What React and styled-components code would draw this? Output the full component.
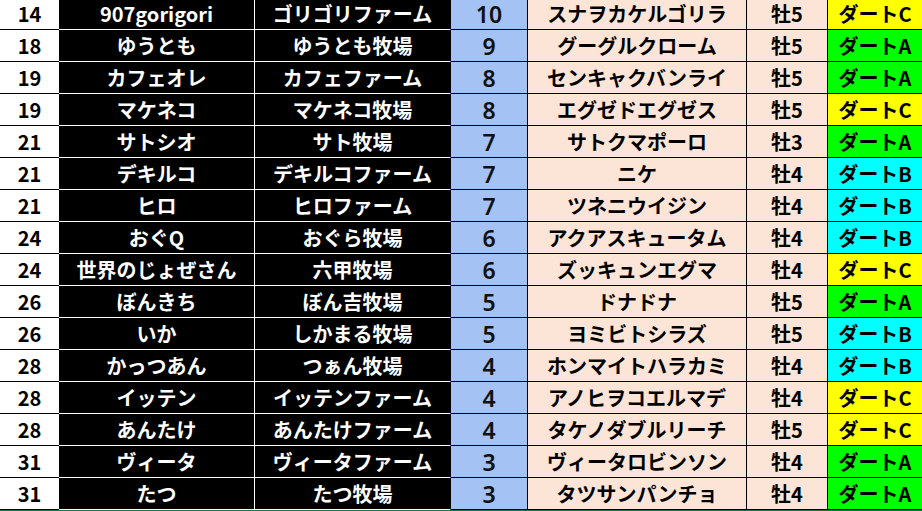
import React from 'react';
import styled, { createGlobalStyle } from 'styled-components';

const GlobalStyle = createGlobalStyle`
  html, body {
    margin: 0;
    padding: 0;
    background: #ffffff;
    overflow: hidden;
  }
  body {
    font-family: "Noto Sans CJK JP", "Noto Sans", sans-serif;
  }
`;

const dartColors = {
  A: '#00ff00',
  B: '#00ffff',
  C: '#ffff00',
};

const rows = [
  ['14', '907gorigori', 'ゴリゴリファーム', '10', 'スナヲカケルゴリラ', '牡5', 'C'],
  ['18', 'ゆうとも', 'ゆうとも牧場', '9', 'グーグルクローム', '牡5', 'A'],
  ['19', 'カフェオレ', 'カフェファーム', '8', 'センキャクバンライ', '牡5', 'A'],
  ['19', 'マケネコ', 'マケネコ牧場', '8', 'エグゼドエグゼス', '牡5', 'C'],
  ['21', 'サトシオ', 'サト牧場', '7', 'サトクマポーロ', '牡3', 'A'],
  ['21', 'デキルコ', 'デキルコファーム', '7', 'ニケ', '牡4', 'B'],
  ['21', 'ヒロ', 'ヒロファーム', '7', 'ツネニウイジン', '牡4', 'B'],
  ['24', 'おぐQ', 'おぐら牧場', '6', 'アクアスキュータム', '牡4', 'B'],
  ['24', '世界のじょぜさん', '六甲牧場', '6', 'ズッキュンエグマ', '牡4', 'C'],
  ['26', 'ぼんきち', 'ぼん吉牧場', '5', 'ドナドナ', '牡5', 'A'],
  ['26', 'いか', 'しかまる牧場', '5', 'ヨミビトシラズ', '牡5', 'B'],
  ['28', 'かっつあん', 'つぁん牧場', '4', 'ホンマイトハラカミ', '牡4', 'B'],
  ['28', 'イッテン', 'イッテンファーム', '4', 'アノヒヲコエルマデ', '牡4', 'C'],
  ['28', 'あんたけ', 'あんたけファーム', '4', 'タケノダブルリーチ', '牡5', 'C'],
  ['31', 'ヴィータ', 'ヴィータファーム', '3', 'ヴィータロビンソン', '牡4', 'A'],
  ['31', 'たつ', 'たつ牧場', '3', 'タツサンパンチョ', '牡4', 'A'],
];

const Sheet = styled.div`
  width: 922px;
  margin-top: -2px;
  display: grid;
  grid-template-columns: 59px 196px 196px 77px 219px 81px 94px;
  grid-auto-rows: 32px;
  border-bottom: 2px solid #217346;
`;

const Cell = styled.div`
  box-sizing: border-box;
  display: flex;
  align-items: center;
  justify-content: center;
  white-space: nowrap;
  font-weight: 700;
  font-size: 20px;
  line-height: 1.2;
  color: #000000;
  border-bottom: 1px solid #000000;
  border-right: 1px solid #000000;
`;

const RankCell = styled(Cell)`
  background: #ffffff;
  border-right: none;
`;

const DarkCell = styled(Cell)`
  background: #000000;
  color: #ffffff;
  border-bottom-color: #ffffff;
  border-right-color: ${(p) => (p.$divider ? '#ffffff' : '#000000')};
`;

const NumberCell = styled(Cell)`
  background: #a4c2f4;
  font-family: "Noto Sans", "Noto Sans CJK JP", sans-serif;
  font-weight: 600;
  font-size: 23px;
  color: #101010;
  padding-top: 2px;
`;

const HorseCell = styled(Cell)`
  background: #fce4d6;
`;

const DartCell = styled(Cell)`
  background: ${(p) => dartColors[p.$grade]};
  border-right: none;
`;

export default function App() {
  return (
    <>
      <GlobalStyle />
      <Sheet>
        {rows.map(([rank, name, farm, num, horse, sex, grade], i) => (
          <React.Fragment key={i}>
            <RankCell>{rank}</RankCell>
            <DarkCell $divider>{name}</DarkCell>
            <DarkCell>{farm}</DarkCell>
            <NumberCell>{num}</NumberCell>
            <HorseCell>{horse}</HorseCell>
            <HorseCell>{sex}</HorseCell>
            <DartCell $grade={grade}>ダート{grade}</DartCell>
          </React.Fragment>
        ))}
      </Sheet>
    </>
  );
}
